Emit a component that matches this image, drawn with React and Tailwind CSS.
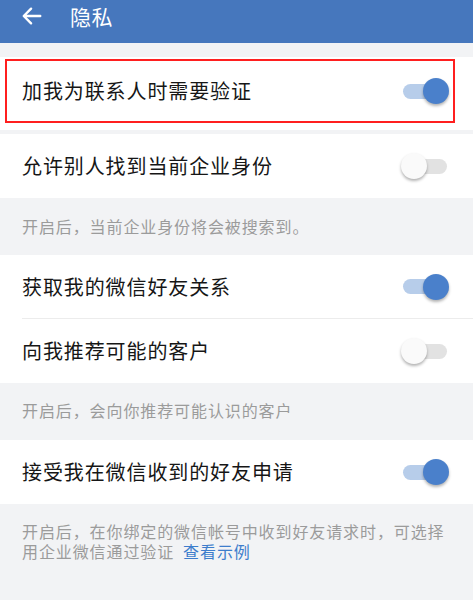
import React, { useState } from "react";

const Toggle = ({ on, onChange }) => (
  <button onClick={onChange} className="relative w-[50px] h-[28px] flex items-center shrink-0">
    <span className={`absolute left-[2px] right-[4px] h-[15px] rounded-full ${on ? "bg-[#b7cdea]" : "bg-[#e2e2e2]"}`}></span>
    <span
      className={`absolute top-[1px] w-[26px] h-[26px] rounded-full shadow-[0_2px_3px_rgba(0,0,0,0.3)] ${
        on ? "left-[22px] bg-[#4a80cb]" : "left-0 bg-[#fafafa]"
      }`}
    ></span>
  </button>
);

const Row = ({ label, on, onChange, divider }) => (
  <div className="bg-white pl-[22px]">
    <div className={`h-[64px] flex items-center justify-between pr-[22px] ${divider ? "border-b border-[#ececec]" : ""}`}>
      <span className="text-[20px] tracking-[0.9px] text-[#161616]">{label}</span>
      <Toggle on={on} onChange={onChange} />
    </div>
  </div>
);

const Note = ({ children }) => (
  <p className="px-[22px] text-[16px] tracking-[0.9px] leading-[20px] text-[#9b9b9b]">{children}</p>
);

export default function App() {
  const [s, setS] = useState({ a: true, b: false, c: true, d: false, e: true });
  const flip = (k) => setS((p) => ({ ...p, [k]: !p[k] }));

  return (
    <div
      className="w-[473px] h-[600px] overflow-hidden bg-[#f2f3f5]"
      style={{ fontFamily: '"Noto Sans CJK SC", "Noto Sans", sans-serif' }}
    >
      {/* Header */}
      <div className="h-[43px] bg-[#4677bd] flex items-start pt-[2px] pl-[21px]">
        <svg className="w-[22px] h-[22px] mt-[3px]" viewBox="0 0 24 24" fill="none" stroke="white" strokeWidth="2.6" strokeLinecap="round" strokeLinejoin="round">
          <path d="M21 12H3.5M11 4l-8 8 8 8" />
        </svg>
        <span className="ml-[27px] text-[21px] leading-[28px] text-white tracking-[0.5px]">隐私</span>
      </div>

      {/* Row with annotation */}
      <div className="mt-[14px] bg-white pt-[2px] pb-[7px] pl-[5px] pr-[18px]">
        <div className="h-[64px] border-2 border-[#ff1f1f] flex items-center justify-between pl-[15px] pr-[2px]">
          <span className="text-[20px] tracking-[0.9px] text-[#161616]">加我为联系人时需要验证</span>
          <Toggle on={s.a} onChange={() => flip("a")} />
        </div>
      </div>

      <div className="mt-[4px]">
        <Row label="允许别人找到当前企业身份" on={s.b} onChange={() => flip("b")} />
      </div>
      <div className="pt-[18px] pb-[19px]">
        <Note>开启后，当前企业身份将会被搜索到。</Note>
      </div>

      <Row label="获取我的微信好友关系" on={s.c} onChange={() => flip("c")} divider />
      <Row label="向我推荐可能的客户" on={s.d} onChange={() => flip("d")} />
      <div className="pt-[17px] pb-[20px]">
        <Note>开启后，会向你推荐可能认识的客户</Note>
      </div>

      <Row label="接受我在微信收到的好友申请" on={s.e} onChange={() => flip("e")} />
      <div className="pt-[17px]">
        <Note>
          开启后，在你绑定的微信帐号中收到好友请求时，可选择用企业微信通过验证
          <span className="ml-[9px] text-[#3d7dcc]">查看示例</span>
        </Note>
      </div>
    </div>
  );
}
